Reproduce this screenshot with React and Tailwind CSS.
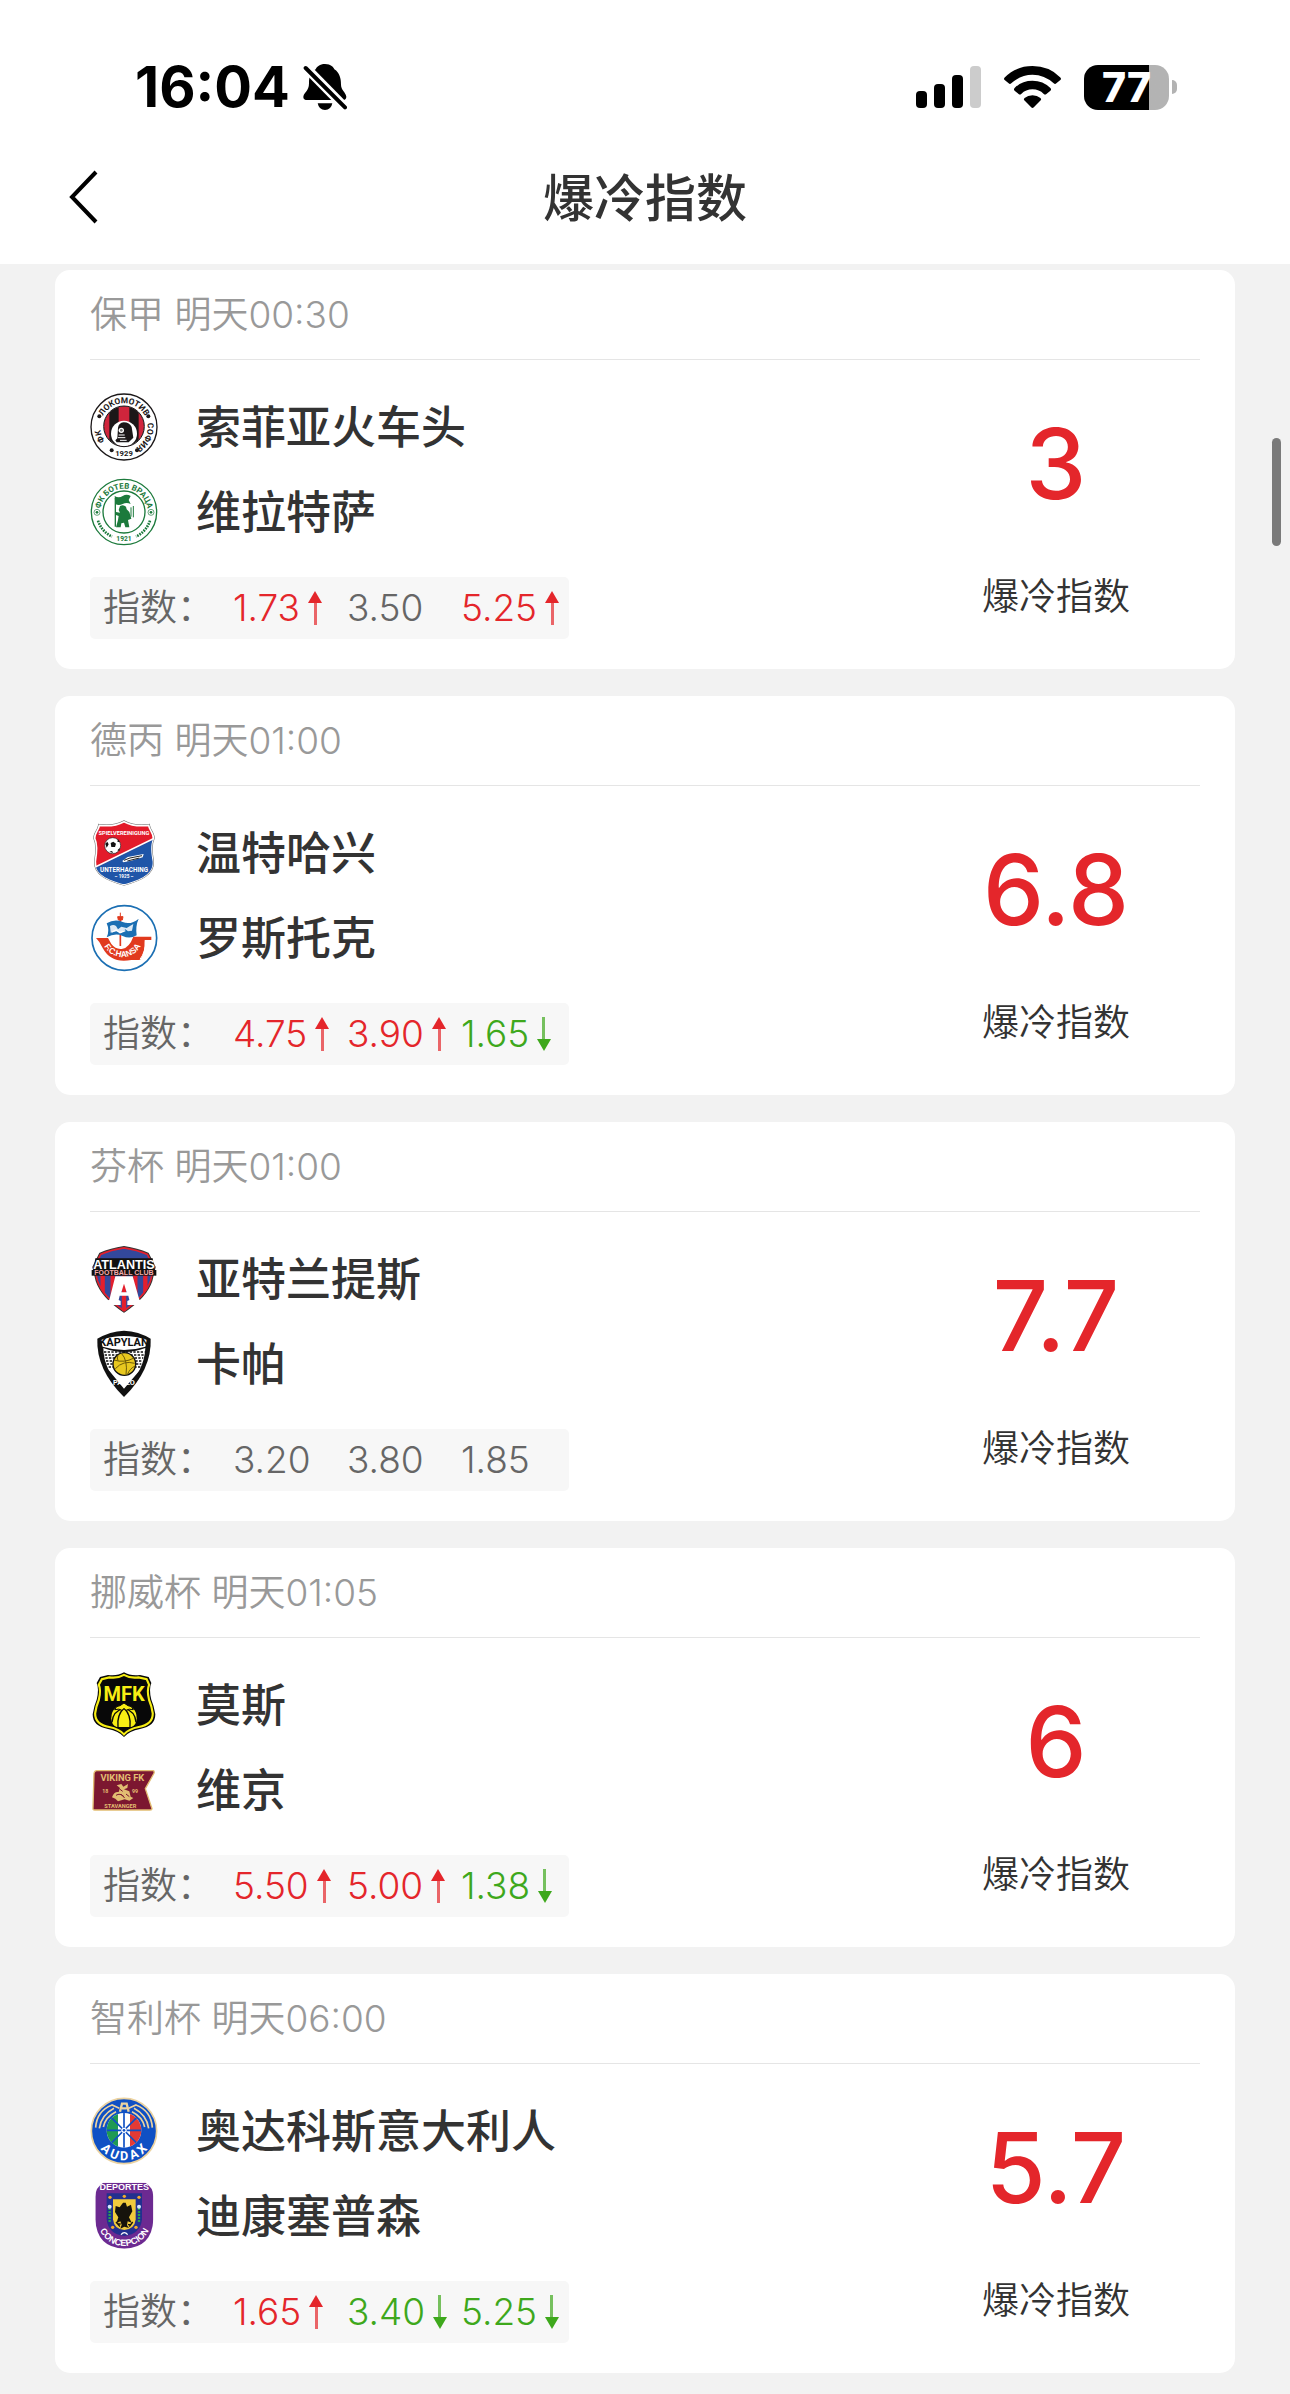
import clsx from 'clsx';

const matches = [
  {
    league: '保甲',
    time: '明天00:30',
    home: { name: '索菲亚火车头', Logo: LokomotivLogo },
    away: { name: '维拉特萨', Logo: BotevLogo },
    odds: [['1.73', 'up'], ['3.50'], ['5.25', 'up']],
    score: '3',
  },
  {
    league: '德丙',
    time: '明天01:00',
    home: { name: '温特哈兴', Logo: UnterhachingLogo },
    away: { name: '罗斯托克', Logo: HansaLogo },
    odds: [['4.75', 'up'], ['3.90', 'up'], ['1.65', 'down']],
    score: '6.8',
  },
  {
    league: '芬杯',
    time: '明天01:00',
    home: { name: '亚特兰提斯', Logo: AtlantisLogo },
    away: { name: '卡帕', Logo: KapylanLogo },
    odds: [['3.20'], ['3.80'], ['1.85']],
    score: '7.7',
  },
  {
    league: '挪威杯',
    time: '明天01:05',
    home: { name: '莫斯', Logo: MossLogo },
    away: { name: '维京', Logo: VikingLogo },
    odds: [['5.50', 'up'], ['5.00', 'up'], ['1.38', 'down']],
    score: '6',
  },
  {
    league: '智利杯',
    time: '明天06:00',
    home: { name: '奥达科斯意大利人', Logo: AudaxLogo },
    away: { name: '迪康塞普森', Logo: ConcepcionLogo },
    odds: [['1.65', 'up'], ['3.40', 'down'], ['5.25', 'down']],
    score: '5.7',
  },
];

function LogoFrame({ children }) {
  return (
    <svg viewBox="0 0 204 204" className="size-[68px] shrink-0" aria-hidden="true">
      {children}
    </svg>
  );
}

function LokomotivLogo() {
  return (
    <LogoFrame>
      <defs>
        <clipPath id="loko-disc"><circle cx="102" cy="100" r="60" /></clipPath>
        <path id="loko-ring" d="M31 102a71 71 0 1 1 142 0a71 71 0 1 1 -142 0" />
      </defs>
      <circle cx="102" cy="102" r="99" fill="#fff" stroke="#1b1718" strokeWidth="4" />
      <g clipPath="url(#loko-disc)">
        <rect x="40" y="38" width="124" height="124" fill="#1b1718" />
        <rect x="40" y="38" width="18" height="124" fill="#d0253c" />
        <rect x="86" y="38" width="32" height="124" fill="#d0253c" />
        <rect x="146" y="38" width="18" height="124" fill="#d0253c" />
        <circle cx="102" cy="122" r="39" fill="#fff" />
      </g>
      <circle cx="102" cy="100" r="61" fill="none" stroke="#1b1718" strokeWidth="3" />
      <path d="M84 104q2-14 17-16q18 0 24 14l5 32-14 14H80l-4-6 6-6z" fill="#1b1718" />
      <circle cx="94" cy="112" r="8" fill="#fff" />
      <path d="M86 126h18M84 134h22M90 142h20" stroke="#fff" strokeWidth="3" />
      <circle cx="94" cy="112" r="4" fill="#777" />
      <g fill="#1b1718" className="font-['Roboto'] font-bold" fontSize="25" textAnchor="middle">
        <text><textPath href="#loko-ring" startOffset="25%">ЛОКОМОТИВ</textPath></text>
        <text><textPath href="#loko-ring" startOffset="57%">СОФИЯ</textPath></text>
        <text><textPath href="#loko-ring" startOffset="94%">ФК</textPath></text>
        <text x="102" y="188" fontSize="23">1929</text>
      </g>
      <g fill="#1b1718">
        <circle cx="28" cy="70" r="6" />
        <circle cx="175" cy="70" r="6" />
        <circle cx="65" cy="172" r="6" />
        <circle cx="141" cy="172" r="6" />
      </g>
    </LogoFrame>
  );
}

function BotevLogo() {
  return (
    <LogoFrame>
      <defs>
        <path id="botev-top" d="M31 103a71 71 0 0 1 142 0" />
      </defs>
      <g fill="none" stroke="#1c7a3c">
        <circle cx="102" cy="102" r="98" fill="#fff" strokeWidth="4" />
        <circle cx="102" cy="102" r="63" strokeWidth="4" />
        <path d="M24 128a82 82 0 0 0 42 48M180 128a82 82 0 0 1-42 48" strokeWidth="8" strokeDasharray="5 3" />
        <circle cx="21" cy="103" r="9" strokeWidth="2" />
        <circle cx="183" cy="103" r="9" strokeWidth="2" />
        <path d="M76 60v86" strokeWidth="4" />
        <path d="M123 116V88M130 118V84" strokeWidth="3" />
      </g>
      <g fill="#1c7a3c">
        <circle cx="21" cy="103" r="4" />
        <circle cx="183" cy="103" r="4" />
        <path d="M74 54q12 8 24 0t24 0l-6 12 6 12q-12-6-24 0t-22 0z" />
        <path d="M90 84q10-6 18 2l2 8 8 8 6 20-10 4 4 22h-12l-4-14-8 2-2 12H78l6-22 2-12-10-4 2-8 12 2-4-8z" />
        <g className="font-['Roboto'] font-bold" textAnchor="middle">
          <text fontSize="24"><textPath href="#botev-top" startOffset="50%">ФК БОТЕВ ВРАЦА</textPath></text>
          <text x="102" y="189" fontSize="20">1921</text>
        </g>
      </g>
    </LogoFrame>
  );
}

function UnterhachingLogo() {
  const shield = 'M102 8C80 20 52 22 28 19C26 34 12 44 14 58C24 78 20 104 16 128C14 164 50 182 102 196C154 182 190 164 188 128C184 104 180 78 190 58C192 44 178 34 176 19C152 22 124 20 102 8Z';
  return (
    <LogoFrame>
      <defs>
        <clipPath id="haching-shield"><path d={shield} /></clipPath>
      </defs>
      <path d={shield} fill="#fff" stroke="#666" strokeWidth="8" />
      <path d={shield} fill="#e31b2a" stroke="#fff" strokeWidth="5" />
      <g clipPath="url(#haching-shield)">
        <path d="M8 150L200 56V204H8z" fill="#1f55a8" />
        <path d="M8 148L200 54" stroke="#fff" strokeWidth="5" />
      </g>
      <circle cx="68" cy="80" r="24" fill="#fff" stroke="#222" strokeWidth="2" />
      <path d="M62 72l8-4 8 6-3 10H64zM46 74l6-6 4 8-6 10zM84 60l6 10-8-2zM82 94l8-8-2 10zM58 98l8-2 4 6z" fill="#111" />
      <path d="M97 126l16-12 48-9-3 10-34 10-24 5z" fill="#fff" />
      <path d="M102 124l18-7 36-7M112 126l36-9" stroke="#222" strokeWidth="3" fill="none" />
      <g fill="#fff" className="font-['Roboto'] font-bold" textAnchor="middle">
        <text x="102" y="49" fontSize="17">SPIELVEREINIGUNG</text>
        <text x="102" y="159" fontSize="19">UNTERHACHING</text>
        <text x="102" y="176" fontSize="14">– 1925 –</text>
      </g>
    </LogoFrame>
  );
}

function HansaLogo() {
  return (
    <LogoFrame>
      <defs>
        <path id="hansa-hull" d="M36 108a62 62 0 0 0 122 0" />
      </defs>
      <circle cx="103" cy="102" r="97" fill="#fff" stroke="#1b6fb3" strokeWidth="5" />
      <path d="M91 26v12M83 38h16l-2 10H85z" stroke="#e13a1e" strokeWidth="3" fill="#e13a1e" />
      <path d="M91 46V126" stroke="#e13a1e" strokeWidth="5" />
      <path d="M50 58q24-14 48-4t48-10q-10 22-6 50q-20 12-42 2t-48 4q10-20 0-42z" fill="#1b6fb3" />
      <path d="M60 66q10-6 18 0l6 10 10-8 16 4 20-12-4 20-12 2-8-6-12 10-14-4-18 4z" fill="#fff" opacity=".85" />
      <path d="M66 84l12-6 12 8 16-6" stroke="#fff" strokeWidth="4" fill="none" />
      <path d="M18 102h36l10 18q14 18 34 14t32-36h54v10h-20q2 36-14 60H124q-60 12-86-36L28 114z" fill="#e13a1e" />
      <path d="M166 112q2 30-16 54" stroke="#fff" strokeWidth="3" fill="none" />
      <text fill="#fff" className="font-['Liberation_Sans'] font-bold" fontSize="25" textAnchor="middle">
        <textPath href="#hansa-hull" startOffset="50%">F.C.HANSA</textPath>
      </text>
    </LogoFrame>
  );
}

function AtlantisLogo() {
  const crest = 'M102 6Q142 12 174 26L194 66 184 108Q168 156 102 200Q36 156 20 108L10 66 30 26Q62 12 102 6Z';
  return (
    <LogoFrame>
      <defs>
        <clipPath id="atlantis-crest"><path d={crest} /></clipPath>
      </defs>
      <path d={crest} fill="#33489c" stroke="#333" strokeWidth="6" />
      <g clipPath="url(#atlantis-crest)">
        <path d="M38 90V160M68 90V190M102 90V204M136 90V190M166 90V160" stroke="#e31f2d" strokeWidth="13" />
        <path d={crest} fill="none" stroke="#e31f2d" strokeWidth="10" />
      </g>
      <path d="M16 40H188L194 76H10z" fill="#111" />
      <rect x="5" y="75" width="194" height="17" fill="#111" />
      <path d="M76 94h52l20 70 12 4v12h-48v-12l6-3-3-13H89l-3 13 6 3v12H48v-12l10-4zM102 116l-8 26h16z" fill="#fff" fillRule="evenodd" />
      <g className="font-['Liberation_Sans'] font-bold" textAnchor="middle">
        <text x="102" y="72" fontSize="38" fill="#fff">ATLANTIS</text>
        <text x="102" y="91" fontSize="21" fill="#f3a9a9">FOOTBALL CLUB</text>
      </g>
    </LogoFrame>
  );
}

function KapylanLogo() {
  return (
    <LogoFrame>
      <path d="M22 26Q60 4 102 2Q146 4 182 26Q186 118 102 201Q18 118 22 26Z" fill="#111" />
      <path d="M40 54Q102 78 166 54Q164 120 102 184Q40 120 40 54Z" fill="#fff" />
      <g stroke="#111" strokeWidth="4" strokeDasharray="7 4">
        <path d="M42 66h122M44 75h118M46 84h114M48 93h110M50 102h104M56 111h96" />
      </g>
      <path d="M54 118L102 176L152 118L146 146L102 196L60 148z" fill="#111" />
      <circle cx="103" cy="102" r="34" fill="#e8c81f" stroke="#111" strokeWidth="4" />
      <path d="M72 90q30 10 60-6M76 116q24-26 58-16M94 70q20 20 14 64M112 134q8-20 24-26M84 76q-4 8 0 16" fill="none" stroke="#6f5b08" strokeWidth="3" />
      <path d="M32 30q70-24 140 0l-6 20q-64 20-128 0z" fill="#fff" />
      <g className="font-['Roboto'] font-bold" textAnchor="middle">
        <text x="102" y="49" fontSize="33" fill="#111">KAPYLAN</text>
        <text x="102" y="166" fontSize="22" fill="#fff">PALLO</text>
      </g>
    </LogoFrame>
  );
}

function MossLogo() {
  const shield = 'M102 4Q122 16 150 12L176 18 184 36Q176 54 184 86Q192 104 196 130Q196 166 150 174Q118 180 102 198Q86 180 54 174Q8 166 8 130Q12 104 20 86Q28 54 20 36L30 18 54 12Q82 16 102 4Z';
  return (
    <LogoFrame>
      <path d={shield} fill="#080808" />
      <path d={shield} fill="none" stroke="#f7ee14" strokeWidth="7" transform="translate(8 8) scale(.92)" />
      <path d="M64 142q0-38 38-38t38 38q0 20-16 26H80q-16-6-16-26z" fill="#f7ee14" />
      <path d="M102 112q-22 20-18 56M102 112q22 20 18 56M102 112q-34 8-36 42M102 112q34 8 36 42" fill="none" stroke="#080808" strokeWidth="4" />
      <path d="M74 116q4-12 16-12l12-8 12 8q12 0 16 12-14-4-22 2l-6-6-6 6q-8-6-22-2z" fill="#f7ee14" stroke="#080808" strokeWidth="3" />
      <text x="102" y="90" fill="#f7ee14" className="font-['Roboto'] font-bold" fontSize="60" textAnchor="middle">MFK</text>
    </LogoFrame>
  );
}

function VikingLogo() {
  return (
    <LogoFrame>
      <path d="M20 44H190Q194 46 192 52L166 98 186 158Q186 162 180 162H14Q8 162 9 156L12 52Q14 44 20 44Z" fill="#7c1730" stroke="#e2bd72" strokeWidth="4" />
      <g fill="#e2bd72" className="font-['Roboto'] font-bold" textAnchor="middle">
        <text x="97" y="74" fontSize="28">VIKING FK</text>
        <text x="46" y="112" fontSize="16">18</text>
        <text x="135" y="112" fontSize="16">99</text>
        <text x="91" y="156" fontSize="17">STAVANGER</text>
        <path d="M66 124q6-18 20-16l4-12-10-8 14-4 6 8 14-8-2 12-10 4 16 6 4 16 8 4-12 8-14-4-20 6-8-8z" />
      </g>
      <path d="M78 118q12-8 24 4M92 114l12 12M90 100l8 6M108 114l10 8" fill="none" stroke="#7c1730" strokeWidth="3" />
    </LogoFrame>
  );
}

function AudaxLogo() {
  return (
    <LogoFrame>
      <defs>
        <clipPath id="audax-wheel"><circle cx="102" cy="100" r="52" /></clipPath>
        <path id="audax-ring" d="M12 100a90 90 0 0 0 180 0" />
      </defs>
      <circle cx="102" cy="102" r="98" fill="#0f50c4" stroke="#ecd3a0" strokeWidth="5" />
      <g clipPath="url(#audax-wheel)">
        <rect x="48" y="46" width="108" height="108" fill="#fff" />
        <rect x="48" y="46" width="36" height="108" fill="#1f9a53" />
        <rect x="120" y="46" width="36" height="108" fill="#e23a35" />
        <path d="M102 46V154M48 100H156M64 62L140 138M140 62L64 138" stroke="#0f50c4" strokeWidth="5" />
      </g>
      <circle cx="102" cy="100" r="8" fill="#fff" />
      <circle cx="102" cy="100" r="4" fill="#0f50c4" />
      <g fill="none" stroke="#ecd3a0" strokeWidth="5">
        <path d="M17 92Q20 42 66 24L88 34M28 94Q34 54 72 34M40 90Q46 60 78 44" />
        <path d="M187 92Q184 42 138 24L116 34M176 94Q170 54 132 34M164 90Q158 60 126 44" />
        <path d="M90 44l6-24h14l6 24M96 34h14" strokeWidth="7" />
      </g>
      <text fill="#fff" className="font-['Roboto'] font-bold" fontSize="38" textAnchor="middle">
        <textPath href="#audax-ring" startOffset="50%">A U D A X</textPath>
      </text>
    </LogoFrame>
  );
}

function ConcepcionLogo() {
  return (
    <LogoFrame>
      <defs>
        <clipPath id="conce-badge"><path d="M40 2H166Q190 16 190 44V112Q186 198 103 200Q20 198 16 112V44Q16 16 40 2Z" /></clipPath>
        <path id="conce-ring" d="M22 110a81 82 0 0 0 162 0" />
      </defs>
      <g clipPath="url(#conce-badge)">
        <rect x="10" y="0" width="190" height="204" fill="#6c2a91" />
        <path d="M50 34H156V112Q152 156 103 162Q54 156 50 112Z" fill="#22308f" />
        <path d="M69 52H137V112Q134 142 103 144Q72 142 69 112Z" fill="#f1cb3d" />
        <path d="M99 62l8 0 4 12 12-6 4 20-10 18 8 16-12-4-2 12 6 8-14-4-12 6 4-12-4-10-12 6 6-18-10-16 2-18 12 4z" fill="#16130c" />
        <path d="M78 120l12 14M128 120l-10 14M84 126h8M114 128h8" stroke="#16130c" strokeWidth="4" />
        <path d="M59 78v42M147 78v42" stroke="#2aa14d" strokeWidth="7" strokeDasharray="6 3" />
        <g fill="#f1a92e">
          <circle cx="60" cy="46" r="5" />
          <circle cx="103" cy="43" r="5" />
          <circle cx="147" cy="46" r="5" />
          <circle cx="68" cy="136" r="5" />
          <circle cx="138" cy="136" r="5" />
        </g>
        <circle cx="59" cy="74" r="6" fill="#d9e6ff" />
        <circle cx="147" cy="74" r="6" fill="#d9e6ff" />
        <path d="M93 158q10-12 20 0" stroke="#fff" strokeWidth="4" fill="none" />
        <g fill="#fff" className="font-['Liberation_Sans'] font-bold" textAnchor="middle">
          <text x="103" y="24" fontSize="27">DEPORTES</text>
          <text fontSize="27"><textPath href="#conce-ring" startOffset="50%">CONCEPCION</textPath></text>
        </g>
      </g>
    </LogoFrame>
  );
}

function MutedBell() {
  return (
    <svg viewBox="0 0 132 138" className="h-[46px] w-[44px]" aria-hidden="true">
      <path d="M66 0C84 0 92 10 94 16C110 26 114 44 114 62C114 78 128 84 130 98Q130 108 118 108H14Q0 108 1 98C3 84 18 82 18 58C18 36 24 24 38 16C42 8 50 0 66 0Z" />
      <path d="M44 118H88Q84 138 66 138T44 118Z" />
      <path d="M6 8L130 134" stroke="#fff" strokeWidth="28" />
      <path d="M8 12L126 130" stroke="#000" strokeWidth="12" strokeLinecap="round" />
    </svg>
  );
}

function StatusBar() {
  return (
    <div className="flex h-[130px] items-center justify-between pt-[44px] pr-[113px] pl-[135px] text-black">
      <div className="flex items-center gap-[13px]">
        <span className="text-[56px] leading-none font-bold">16:04</span>
        <MutedBell />
      </div>
      <div className="flex items-center">
        <svg viewBox="0 0 66 42" className="mr-[22px] h-[42px] w-[66px]" aria-hidden="true">
          <rect x="0" y="25" width="11" height="17" rx="4" />
          <rect x="18" y="18" width="11" height="24" rx="4" />
          <rect x="36" y="9" width="11" height="33" rx="4" />
          <rect x="54" y="0" width="11" height="42" rx="4" fill="#ccc" />
        </svg>
        <svg viewBox="0 0 172 126" className="mr-[23px] h-[42px] w-[57px]" aria-hidden="true">
          <path d="M86 0Q136 0 170 34Q174 38 170 42L158 52Q154 56 150 52Q122 26 86 26T22 52Q18 56 14 52L2 42Q-2 38 2 34Q36 0 86 0Z" />
          <path d="M86 44Q118 44 140 66Q144 70 140 74L128 84Q124 88 120 84Q106 70 86 70T52 84Q48 88 44 84L32 74Q28 70 32 66Q54 44 86 44Z" />
          <path d="M86 88Q100 88 110 96Q114 100 110 104L90 124Q86 128 82 124L62 104Q58 100 62 96Q72 88 86 88Z" />
        </svg>
        <div className="flex h-[45px] w-[85px] items-center justify-center rounded-[14px] bg-linear-to-r from-black from-77% to-[#b3b3b3] to-77%">
          <span className="text-[41px] leading-none font-extrabold text-white">77</span>
        </div>
        <span className="ml-[3px] h-[14px] w-[5px] rounded-r-full bg-[#b3b3b3]" />
      </div>
    </div>
  );
}

function NavBar() {
  return (
    <div className="grid h-[134px] grid-cols-[1fr_auto_1fr] items-center">
      <button type="button" aria-label="返回" className="ml-[68px] justify-self-start">
        <svg viewBox="0 0 30 54" className="h-[54px] w-[30px]" fill="none" stroke="#000" strokeWidth="4" aria-hidden="true">
          <path d="M28 2L4 27L28 52" />
        </svg>
      </button>
      <h1 className="pt-[2px] text-[51px] leading-none font-medium text-[#333]">爆冷指数</h1>
    </div>
  );
}

function TrendArrow({ trend }) {
  return (
    <svg
      viewBox="0 0 14 34"
      className={clsx('h-[34px] w-[14px] shrink-0', trend === 'down' && 'rotate-180')}
      fill="currentColor"
      aria-hidden="true"
    >
      <path d="M7 0L14 12H0z" />
      <rect x="6" y="12" width="3" height="22" opacity=".7" />
    </svg>
  );
}

function Odd({ value, trend }) {
  return (
    <li
      className={clsx(
        'flex w-[114px] shrink-0 items-center gap-[8px] whitespace-nowrap',
        trend === 'up' && 'text-[#e4262b]',
        trend === 'down' && 'text-[#3ea81c]',
        !trend && 'text-[#666]'
      )}
    >
      {value}
      {trend && <TrendArrow trend={trend} />}
    </li>
  );
}

function TeamRow({ team }) {
  const { Logo, name } = team;
  return (
    <div className="flex h-[68px] items-center gap-[38px]">
      <Logo />
      <span className="text-[45px] leading-none font-medium text-[#333]">{name}</span>
    </div>
  );
}

function MatchCard({ match }) {
  return (
    <article className="rounded-[15px] bg-white px-[35px] pb-[30px]">
      <div className="flex h-[90px] items-center border-b border-[#e5e5e5] text-[37px] font-[350] text-[#999]">
        {match.league} {match.time}
      </div>
      <div className="flex justify-between">
        <div className="pt-[33px]">
          <div className="flex flex-col gap-[17px]">
            <TeamRow team={match.home} />
            <TeamRow team={match.away} />
          </div>
          <div className="mt-[31px] flex h-[62px] w-[479px] items-center rounded-[5px] bg-[#f7f7f7] pl-[13px] text-[37px] font-[350]">
            <span className="w-[130px] shrink-0 text-[#666]">指数：</span>
            <ul className="flex">
              {match.odds.map(([value, trend], i) => (
                <Odd key={i} value={value} trend={trend} />
              ))}
            </ul>
          </div>
        </div>
        <div className="flex w-[288px] flex-col items-center pt-[52px]">
          <strong className="text-[97px] leading-[104px] font-medium text-[#e4262b]">{match.score}</strong>
          <span className="mt-[53px] text-[37px] leading-[56px] font-[350] text-[#333]">爆冷指数</span>
        </div>
      </div>
    </article>
  );
}

export default function App() {
  return (
    <div className="relative min-h-screen bg-[#f2f2f2] font-['Inter','Noto_Sans_CJK_SC',sans-serif]">
      <header className="bg-white">
        <StatusBar />
        <NavBar />
      </header>
      <main className="flex flex-col gap-[27px] px-[55px] pt-[6px] pb-[21px]">
        {matches.map((match) => (
          <MatchCard key={match.home.name} match={match} />
        ))}
      </main>
      {/* scroll thumb */}
      <div className="absolute top-[438px] right-[9px] h-[108px] w-[9px] rounded-full bg-[#7a7a7a]" />
    </div>
  );
}
